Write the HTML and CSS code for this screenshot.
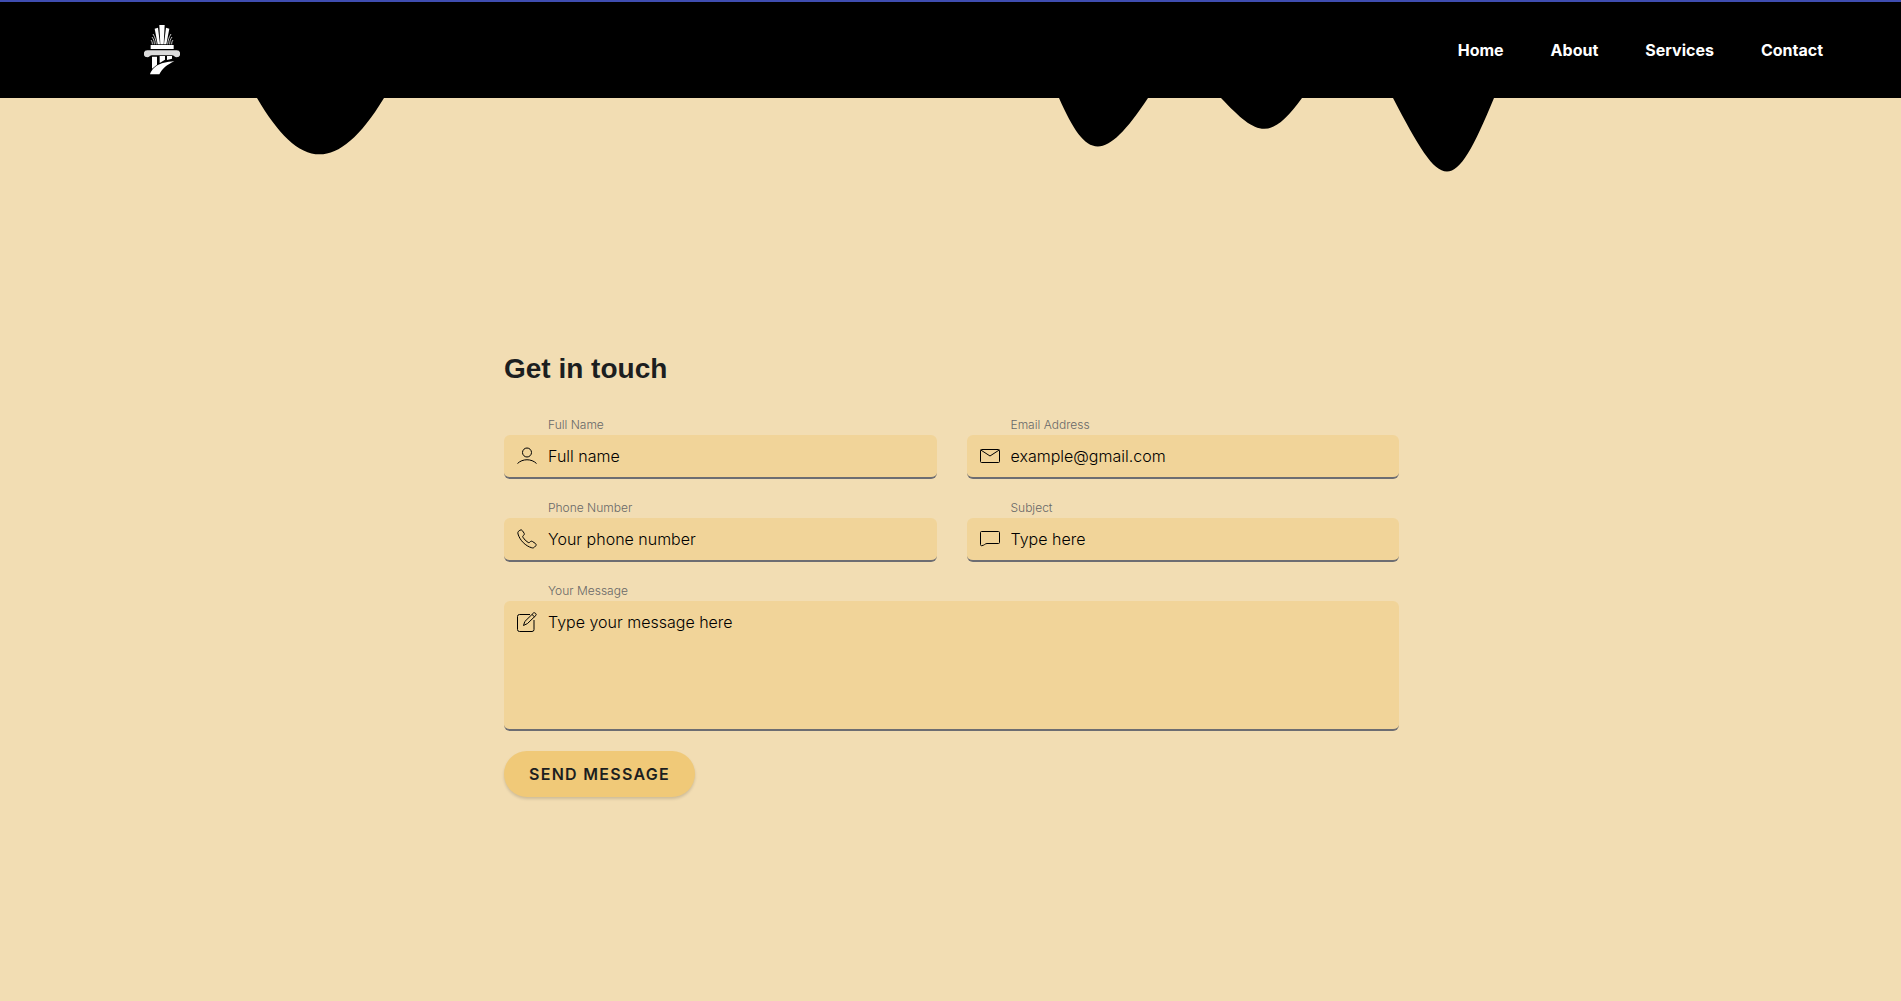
FILE: index.html
```html
<!DOCTYPE html>
<html lang="en">
<head>
<meta charset="utf-8">
<meta name="viewport" content="width=device-width, initial-scale=1">
<title>Contact</title>
<link rel="stylesheet" href="styles.css">
</head>
<body>
<header class="site-header">
  <a class="logo" href="#" aria-label="Homepage">
    <svg viewBox="42 75 108 150" width="36" height="50" aria-hidden="true">
      <g fill="#fff">
        <path d="M88 75h16l-3 58H91zM74 86l10-3 6 50h-7zM118 86l-10-3-6 50h7z"/>
        <path d="M62 135h69v12H62z"/>
        <path d="M66 170h15v24l-15 12zM89 168h16v11l-16 10zM111 168h15v8l-15 4z"/>
        <path d="M60 223c8-20 24-36 73-39-22 10-36 22-45 39z"/>
      </g>
      <path d="M79 133c-1-12-4-22-10-31M73 133c0-10-2-15-7-22M67 133c0-6-1-9-4-13M113 133c1-12 4-22 10-31M119 133c0-10 2-15 7-22M125 133c0-6 1-9 4-13" fill="none" stroke="#c4c4c4" stroke-width="3"/>
      <path d="M52 151h88a10 10 0 0 1 0 21c-6 0-8-6-14-6H66c-6 0-8 6-14 6a10 10 0 0 1 0-21z" fill="#dcdcdc"/>
    </svg>
  </a>
  <nav class="site-nav">
    <a href="#">Home</a>
    <a href="#">About</a>
    <a href="#">Services</a>
    <a href="#">Contact</a>
  </nav>
</header>
<svg class="drips" viewBox="0 0 1901 76" preserveAspectRatio="none" aria-hidden="true">
  <path d="M257 0C297 68 334 82 384 0zM1059 0C1086 61 1103 68 1148 0zM1221 0C1257 38 1270 44 1302 0zM1393 0C1442 94 1452 102 1494 0z"/>
</svg>
<main class="contact">
  <h1>Get in touch</h1>
  <form class="contact-form">
    <div class="field">
      <label for="name">Full Name</label>
      <div class="control">
        <svg class="icon" viewBox="0 0 20 20" aria-hidden="true"><circle cx="10" cy="6.500" r="4.500"/><path d="M.5 17.500c5-5 14-5 19 0"/></svg>
        <input id="name" type="text" placeholder="Full name">
      </div>
    </div>
    <div class="field">
      <label for="email">Email Address</label>
      <div class="control">
        <svg class="icon" viewBox="0 0 20 20" aria-hidden="true"><rect x=".5" y="3.500" width="19" height="13" rx="1"/><path d="M.8 4l9.200 6 9.200-6"/></svg>
        <input id="email" type="email" placeholder="example@gmail.com">
      </div>
    </div>
    <div class="field">
      <label for="phone">Phone Number</label>
      <div class="control">
        <svg class="icon" viewBox="0 0 20 20" aria-hidden="true"><path d="M1.300 2.500 2.800 1.300a1.800 1.800 0 0 1 2.600.4l1.700 2.500c.4.700.3 1.400-.3 1.900l-.7.600c-.5.500-.5.900-.2 1.500 1.300 2.200 3.100 4 5.300 5.300.6.300 1 .3 1.500-.2l.7-.7c.5-.5 1.200-.6 1.900-.2l3 2c.9.600 1.100 1.700.4 2.500l-1.300 1.300c-.7.700-1.600.9-2.600.6C8.500 17 3 11.500 1 5c-.3-1-.2-1.900.3-2.500z"/></svg>
        <input id="phone" type="tel" placeholder="Your phone number">
      </div>
    </div>
    <div class="field">
      <label for="subject">Subject</label>
      <div class="control">
        <svg class="icon" viewBox="0 0 20 20" aria-hidden="true"><path d="M1.500 2.500h17a1 1 0 0 1 1 1v10a1 1 0 0 1-1 1H7c-2 0-2.500 2-5.500 2.200-.6 0-1-.4-1-1V3.500a1 1 0 0 1 1-1z"/></svg>
        <input id="subject" type="text" placeholder="Type here">
      </div>
    </div>
    <div class="field field-wide">
      <label for="message">Your Message</label>
      <div class="control control-area">
        <svg class="icon" viewBox="0 0 20 20" aria-hidden="true"><path d="M13 2.500H2.500a2 2 0 0 0-2 2v13a2 2 0 0 0 2 2h12.500a2 2 0 0 0 2-2V8M6.500 13.500l1.300-4L16.700.8c.8-.6 3.300 1.200 2.300 2.500L10.500 11.500zM15 2.500l2.500 2.300"/></svg>
        <textarea id="message" placeholder="Type your message here"></textarea>
      </div>
    </div>
    <button class="submit" type="submit">SEND MESSAGE</button>
  </form>
</main>
</body>
</html>
```
FILE: styles.css
```css
* {
  box-sizing: border-box;
}

body {
  margin: 0;
  min-height: 100vh;
  background: #f2ddb3;
  color: #1c1e1f;
  font-family: Inter, sans-serif;
  font-size: 16px;
}

.site-header {
  display: flex;
  align-items: center;
  justify-content: space-between;
  height: 98px;
  padding: 0 78px 0 144px;
  border-top: 2px solid #3f4db0;
  background: #000;
}

.logo svg {
  display: block;
}

.site-nav {
  display: flex;
  gap: 47px;
}

.site-nav a {
  color: #fff;
  font-weight: 700;
  line-height: 24px;
  text-decoration: none;
}

.drips {
  display: block;
  width: 100%;
  height: 76px;
}

.contact {
  max-width: 925px;
  margin: 0 auto;
  padding: 175px 14px 60px 16px;
}

h1 {
  margin: 0 0 27px;
  font-family: "Liberation Sans", Arial, sans-serif;
  font-size: 28px;
  font-weight: 700;
  line-height: 40px;
}

.contact-form {
  display: grid;
  grid-template-columns: 1fr 1fr;
  gap: 20px 30px;
}

.field-wide {
  grid-column: 1 / -1;
}

.field label {
  display: block;
  width: max-content;
  margin: 0 0 2px 44px;
  color: #686868;
  font-size: 12px;
  font-weight: 300;
  line-height: 17px;
}

.control {
  display: flex;
  align-items: center;
  gap: 11px;
  height: 44px;
  padding: 0 13px;
  border-bottom: 2px solid #6d6d72;
  border-radius: 6px;
  background: #f1d499;
}

.control-area {
  align-items: flex-start;
  height: 130px;
  padding-top: 11px;
}

.icon {
  flex: none;
  width: 20px;
  height: 20px;
  fill: none;
  stroke: #000;
  stroke-width: 1;
}

input,
textarea {
  flex: 1;
  min-width: 0;
  padding: 0;
  border: 0;
  outline: 0;
  background: none;
  color: #000;
  font: 300 16px/20px Inter, sans-serif;
}

textarea {
  height: 100px;
  resize: none;
}

::placeholder {
  color: #000;
  opacity: 1;
}

.submit {
  justify-self: start;
  height: 46px;
  padding: 0 25px;
  border: 0;
  border-radius: 23px;
  background: #f0c978;
  box-shadow: 0 2px 3px rgba(0, 0, 0, 0.15);
  color: #1c1e1f;
  font: 600 16px/24px Inter, sans-serif;
  letter-spacing: 0.08em;
}

@media (max-width: 700px) {
  .site-header {
    padding: 0 20px;
  }

  .site-nav {
    gap: 16px;
  }

  .contact {
    padding-top: 60px;
  }

  .contact-form {
    grid-template-columns: 1fr;
  }
}
```
